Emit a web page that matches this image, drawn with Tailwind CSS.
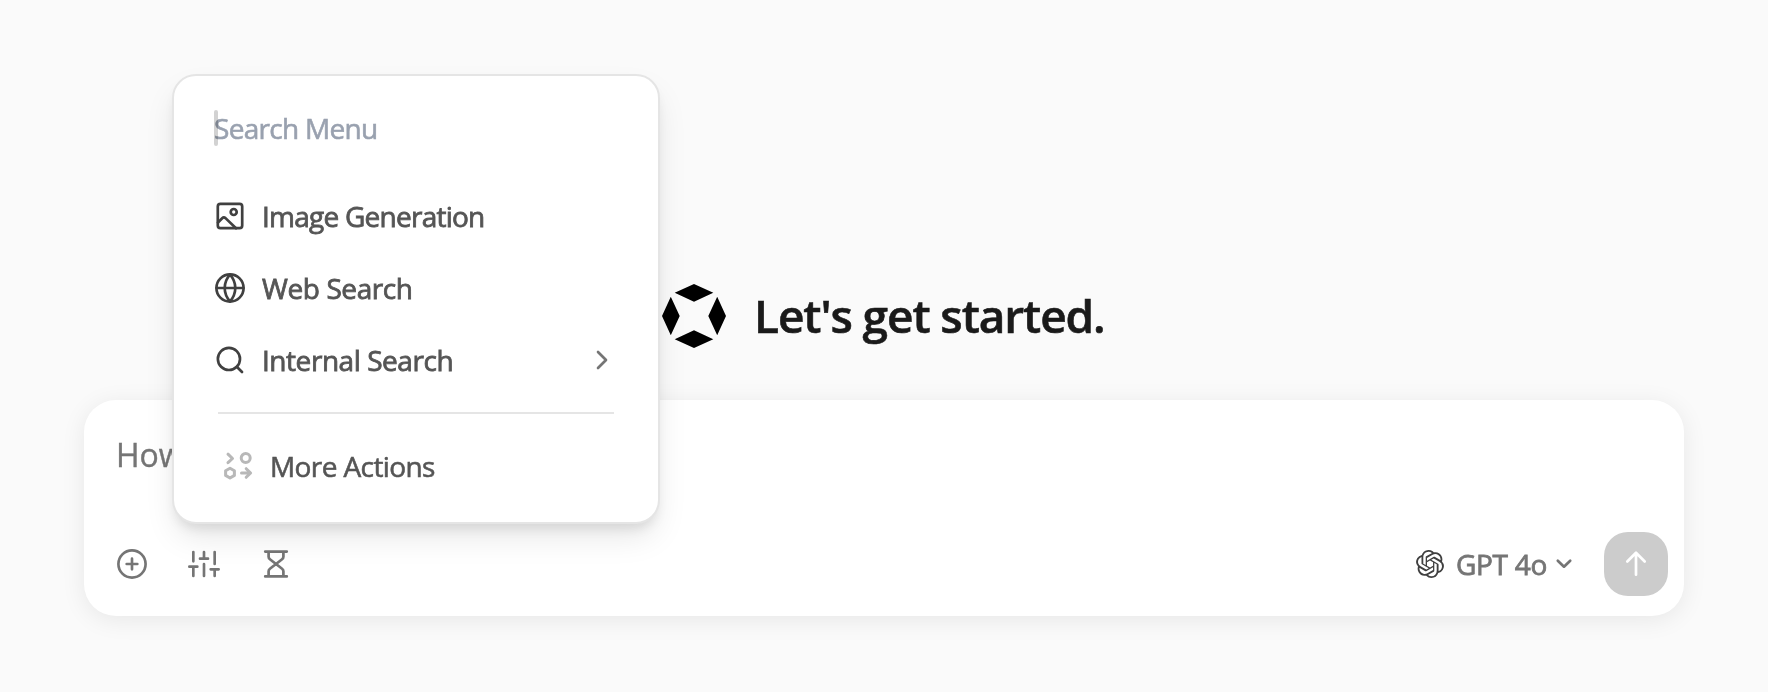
<!DOCTYPE html>
<html lang="en">
<head>
<meta charset="utf-8">
<title>Chat</title>
<script src="https://cdn.jsdelivr.net/npm/@tailwindcss/browser@4"></script>
</head>
<body class="h-[692px] w-[1768px] overflow-hidden bg-[#fafafa] font-['Open_Sans',sans-serif]">
<main class="relative flex h-full flex-col px-[84px] pt-[284px]">
  <div class="flex h-16 items-center justify-center gap-7">
    <svg class="size-16 shrink-0" viewBox="0 0 64 64" fill="#000"><path d="M32 0 51.3 8.8 32 17.7 12.7 8.8ZM32 46.3 51.3 55.2 32 64 12.7 55.2ZM8.8 12.7 17.7 32 8.8 51.3 0 32ZM55.2 12.7 64 32 55.2 51.3 46.3 32Z"/></svg>
    <h1 class="w-[352px] pb-[3px] text-[46px] leading-[60px] font-semibold tracking-[-1.1px] whitespace-nowrap text-[#1a1a1a] [-webkit-text-stroke:0.6px_#1a1a1a]">Let's get started.</h1>
  </div>
  <section class="mt-[52px] flex h-[216px] flex-col justify-between rounded-[32px] bg-white pt-8 pr-4 pb-5 pl-8 shadow-[0_4px_24px_rgba(0,0,0,0.08)]">
    <p class="text-[32px] leading-[46px] text-[#757575] [-webkit-text-stroke:0.4px_#757575]">How</p>
    <div class="flex h-16 items-center justify-between">
      <div class="flex items-center gap-10 text-[#757575]">
        <svg class="size-8" viewBox="0 0 24 24" fill="none" stroke="currentColor" stroke-width="2" stroke-linecap="round"><circle cx="12" cy="12" r="10.2"/><path d="M12 8v8M8 12h8"/></svg>
        <svg class="size-8 overflow-visible" viewBox="0 0 24 24" fill="none" stroke="currentColor" stroke-width="2" stroke-linecap="round"><path d="M4 21v-7M4 10V3M12 21v-9M12 8V3M20 21v-5M20 12V3M1 14h6M9 8h6M17 16h6"/></svg>
        <svg class="size-8" viewBox="0 0 32 32" fill="none" stroke="currentColor" stroke-width="2.7" stroke-linecap="round" stroke-linejoin="round"><path d="M5.2 3.6h21.6M5.2 28.4h21.6M8.6 3.6v5.2c0 1 .5 1.9 1.3 2.4L16 16l6.1-4.8c.8-.5 1.3-1.4 1.3-2.4V3.6M8.6 28.4v-5.2c0-1 .5-1.9 1.3-2.4L16 16l6.1 4.8c.8.5 1.3 1.4 1.3 2.4v5.2"/></svg>
      </div>
      <div class="flex items-center">
        <svg class="size-7 text-[#404040]" viewBox="0 0 24 24" fill="currentColor"><path d="M22.2819 9.8211a5.9847 5.9847 0 0 0-.5157-4.9108 6.0462 6.0462 0 0 0-6.5098-2.9A6.0651 6.0651 0 0 0 4.9807 4.1818a5.9847 5.9847 0 0 0-3.9977 2.9 6.0462 6.0462 0 0 0 .7427 7.0966 5.98 5.98 0 0 0 .511 4.9107 6.051 6.051 0 0 0 6.5146 2.9001A5.9847 5.9847 0 0 0 13.2599 24a6.0557 6.0557 0 0 0 5.7718-4.2058 5.9894 5.9894 0 0 0 3.9977-2.9001 6.0557 6.0557 0 0 0-.7475-7.0729zm-9.022 12.6081a4.4755 4.4755 0 0 1-2.8764-1.0408l.1419-.0804 4.7783-2.7582a.7948.7948 0 0 0 .3927-.6813v-6.7369l2.02 1.1686a.071.071 0 0 1 .038.052v5.5826a4.504 4.504 0 0 1-4.4945 4.4944zm-9.6607-4.1254a4.4708 4.4708 0 0 1-.5346-3.0137l.142.0852 4.783 2.7582a.7712.7712 0 0 0 .7806 0l5.8428-3.3685v2.3324a.0804.0804 0 0 1-.0332.0615L9.74 19.9502a4.4992 4.4992 0 0 1-6.1408-1.6464zM2.3408 7.8956a4.485 4.485 0 0 1 2.3655-1.9728V11.6a.7664.7664 0 0 0 .3879.6765l5.8144 3.3543-2.0201 1.1685a.0757.0757 0 0 1-.071 0l-4.8303-2.7865A4.504 4.504 0 0 1 2.3408 7.872zm16.5963 3.8558L13.1038 8.364 15.1192 7.2a.0757.0757 0 0 1 .071 0l4.8303 2.7913a4.4944 4.4944 0 0 1-.6765 8.1042v-5.6772a.79.79 0 0 0-.407-.667zm2.0107-3.0231l-.142-.0852-4.7735-2.7818a.7759.7759 0 0 0-.7854 0L9.409 9.2297V6.8974a.0662.0662 0 0 1 .0284-.0615l4.8303-2.7866a4.4992 4.4992 0 0 1 6.6802 4.66zM8.3065 12.863l-2.02-1.1638a.0804.0804 0 0 1-.038-.0567V6.0742a4.4992 4.4992 0 0 1 7.3757-3.4537l-.142.0805L8.704 5.459a.7948.7948 0 0 0-.3927.6813zm1.0976-2.3654l2.602-1.4998 2.6069 1.4998v2.9994l-2.5974 1.4997-2.6067-1.4997Z"/></svg>
        <span class="ml-3 w-[92px] text-[28px] leading-8 tracking-[-0.3px] whitespace-nowrap text-[#757575] [-webkit-text-stroke:0.8px_#757575]">GPT 4o</span>
        <svg class="mr-7 ml-1 size-6" viewBox="0 0 24 24" fill="none" stroke="#757575" stroke-width="2.7" stroke-linecap="round" stroke-linejoin="round"><path d="m5.8 8.7 6.2 6 6.2-6"/></svg>
        <button class="flex size-16 items-center justify-center rounded-[24px] bg-[#ccc]">
          <svg class="size-8" viewBox="0 0 32 32" fill="none" stroke="#fff" stroke-width="2.7" stroke-linecap="round" stroke-linejoin="round"><path d="M16 26.7V5M7.3 13.5 16 4.8l8.7 8.7"/></svg>
        </button>
      </div>
    </div>
  </section>

  <div class="absolute top-[74px] left-[172px] flex h-[450px] w-[488px] flex-col rounded-3xl border-2 border-[#e5e5e5] bg-white shadow-[0_16px_32px_-4px_rgba(0,0,0,0.1),0_8px_12px_-4px_rgba(0,0,0,0.1)]">
    <div class="mt-[34px] ml-10 flex h-9 items-center">
      <span class="h-9 w-1 rounded-sm bg-[#d2d2d2]"></span>
      <span class="-ml-1 text-[28px] leading-9 tracking-[-0.7px] whitespace-nowrap text-[#99a1af] mix-blend-multiply [-webkit-text-stroke:0.6px_#99a1af]">Search Menu</span>
    </div>
    <ul class="mt-[34px] flex flex-col text-[28px] leading-9 text-[#555] [-webkit-text-stroke:0.8px_#555]">
      <li class="flex h-[72px] items-center gap-4 pl-10">
        <svg class="size-8" viewBox="0 0 32 32" fill="none" stroke="#404040" stroke-width="2.7" stroke-linecap="round" stroke-linejoin="round"><rect x="3.8" y="3.8" width="24.4" height="24.4" rx="2.6"/><circle cx="19.7" cy="12" r="3"/><path d="m4 22.5 4.2-4.3c1-1 2.2-1 3.3-.1L22 28.3"/></svg>
        <span class="tracking-[-0.75px]">Image Generation</span>
      </li>
      <li class="flex h-[72px] items-center gap-4 pl-10">
        <svg class="size-8" viewBox="0 0 24 24" fill="none" stroke="#404040" stroke-width="2" stroke-linecap="round" stroke-linejoin="round"><circle cx="12" cy="12" r="10.2"/><path d="M2 12h20M12 2a15.3 15.3 0 0 1 4 10 15.3 15.3 0 0 1-4 10 15.3 15.3 0 0 1-4-10 15.3 15.3 0 0 1 4-10z"/></svg>
        <span class="tracking-[-0.4px]">Web Search</span>
      </li>
      <li class="flex h-[72px] items-center gap-4 pr-10 pl-10">
        <svg class="size-8" viewBox="0 0 24 24" fill="none" stroke="#404040" stroke-width="2" stroke-linecap="round"><circle cx="11.2" cy="11.2" r="8.3"/><path d="m21 21-3.9-3.9"/></svg>
        <span class="tracking-[-0.45px]">Internal Search</span>
        <svg class="ml-auto size-8" viewBox="0 0 24 24" fill="none" stroke="#757575" stroke-width="2" stroke-linecap="round" stroke-linejoin="round"><path d="m9 18 6-6-6-6"/></svg>
      </li>
    </ul>
    <div class="mt-4 mr-11 ml-11 h-0.5 bg-[#e5e5e5]"></div>
    <div class="mt-4 flex h-[72px] items-center gap-4 pl-12 text-[28px] leading-9 text-[#555] [-webkit-text-stroke:0.6px_#555]">
      <svg class="size-8" viewBox="0 0 32 32" fill="none" stroke="#b8b8b8" stroke-width="3" stroke-linecap="round" stroke-linejoin="round"><path d="m6 4.2 4.5 4.3L6 12.7"/><circle cx="23.7" cy="8" r="4.5"/><path d="M8 18.3 12.4 20.8v4.6L8 28l-4.4-2.6v-4.6ZM19.5 23h9M24.2 18.7l4.4 4.3-4.4 4.3"/></svg>
      <span class="tracking-[-0.6px]">More Actions</span>
    </div>
  </div>
</main>
</body>
</html>
